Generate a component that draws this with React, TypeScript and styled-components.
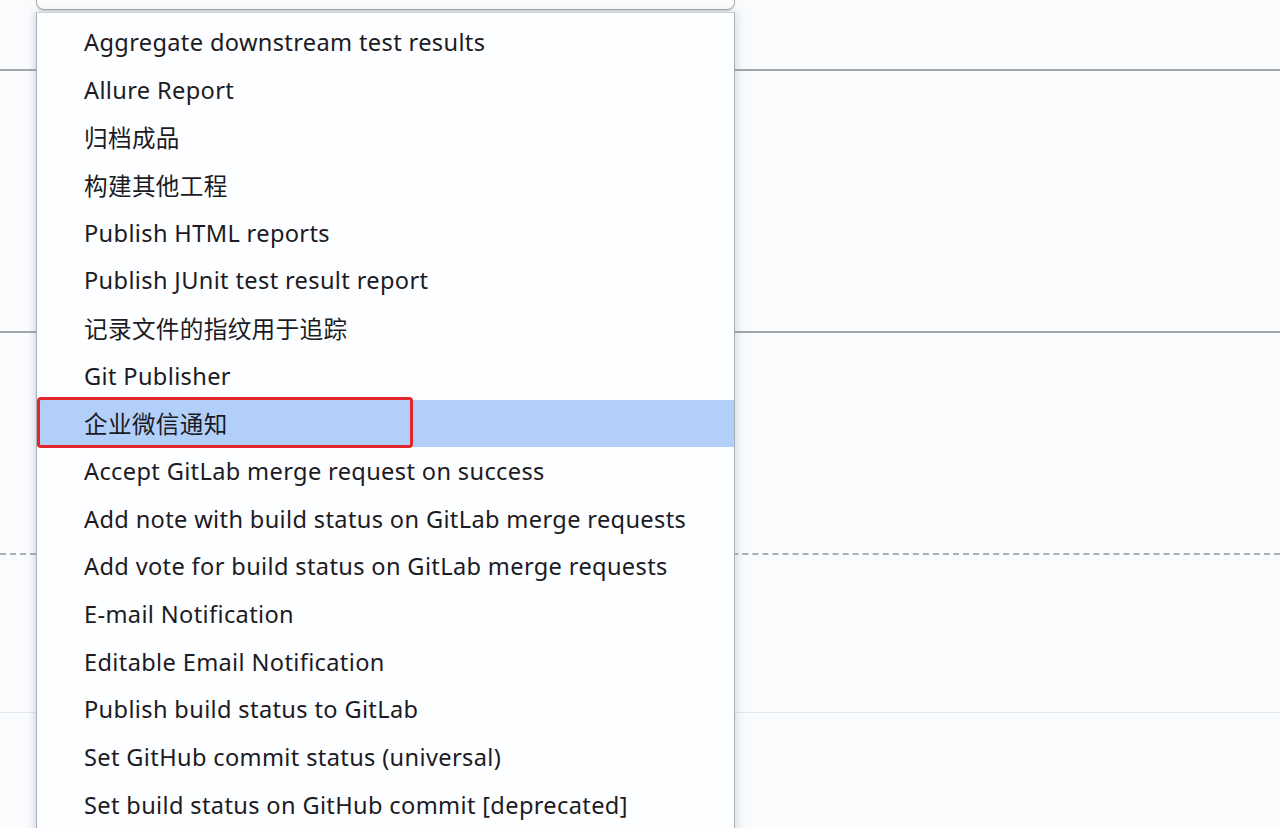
import React from "react";
import styled, { createGlobalStyle } from "styled-components";

const GlobalStyle = createGlobalStyle`
  html, body {
    margin: 0;
    padding: 0;
    background: #f9fbfd;
    overflow: hidden;
  }
  body {
    font-family: "Noto Sans", "Noto Sans CJK SC", sans-serif;
  }
`

const Page = styled.div`
  position: relative;
  width: 1280px;
  height: 828px;
  overflow: hidden;
  background: #f9fbfd;
`

const Section = styled.div<{ h: number; line: 'solid' | 'dashed' | 'faint' | 'none' }>`
  height: ${props => props.h}px;
  box-sizing: border-box;
  ${props => props.line === 'solid' ? `border-bottom: 2px solid #9ea6ad;` : ``}
  ${props => props.line === 'dashed' ? `border-bottom: 2px dashed #a9afb5;` : ``}
  ${props => props.line === 'faint' ? `border-bottom: 1px solid #e3e7eb;` : ``}
`

const Dropdown = styled.div`
  position: absolute;
  left: 36px;
  top: -40px;
  width: 699px;
  display: flex;
  flex-direction: column;
  gap: 2px;
`

const SelectBox = styled.div`
  height: 50px;
  box-sizing: border-box;
  border: 1px solid #a7adb4;
  border-radius: 8px;
  background: #fdfbfb;
  box-shadow: 0 1px 1px rgba(120, 130, 140, 0.35);
`

const List = styled.ul`
  margin: 0;
  padding: 5px 0 0 0;
  list-style: none;
  height: 900px;
  background: #fdfeff;
  border-left: 1px solid #a9afb6;
  border-right: 1px solid #a9afb6;
  border-top: 1px solid #c9ced3;
  box-shadow: -3px 0 6px rgba(150, 160, 175, 0.25), 3px 0 8px rgba(150, 160, 175, 0.25);
`

const Option = styled.li<{ selected?: boolean }>`
  position: relative;
  height: 47.7px;
  display: flex;
  align-items: center;
  padding-left: 47px;
  font-size: 23.6px;
  color: #1c1b24;
  letter-spacing: 0.35px;
  white-space: nowrap;
  ${props => props.selected ? `background: #b2cffa;` : ``}
`

const Marker = styled.span`
  position: absolute;
  left: 0;
  top: -3px;
  width: 376px;
  height: 51px;
  box-sizing: border-box;
  border: 3px solid #e1262c;
  border-radius: 4px;
  pointer-events: none;
`

const options = [
  "Aggregate downstream test results",
  "Allure Report",
  "归档成品",
  "构建其他工程",
  "Publish HTML reports",
  "Publish JUnit test result report",
  "记录文件的指纹用于追踪",
  "Git Publisher",
  "企业微信通知",
  "Accept GitLab merge request on success",
  "Add note with build status on GitLab merge requests",
  "Add vote for build status on GitLab merge requests",
  "E-mail Notification",
  "Editable Email Notification",
  "Publish build status to GitLab",
  "Set GitHub commit status (universal)",
  "Set build status on GitHub commit [deprecated]",
]

const SELECTED = "企业微信通知"

const App = () => {
  return (
    <Page>
      <GlobalStyle />
      <Section h={71} line="solid" />
      <Section h={262} line="solid" />
      <Section h={222} line="dashed" />
      <Section h={158} line="faint" />
      <Dropdown>
        <SelectBox />
        <List>
          {options.map(o => (
            <Option key={o} selected={o === SELECTED}>
              {o}
              {o === SELECTED && <Marker />}
            </Option>
          ))}
        </List>
      </Dropdown>
    </Page>
  )
}

export default App
